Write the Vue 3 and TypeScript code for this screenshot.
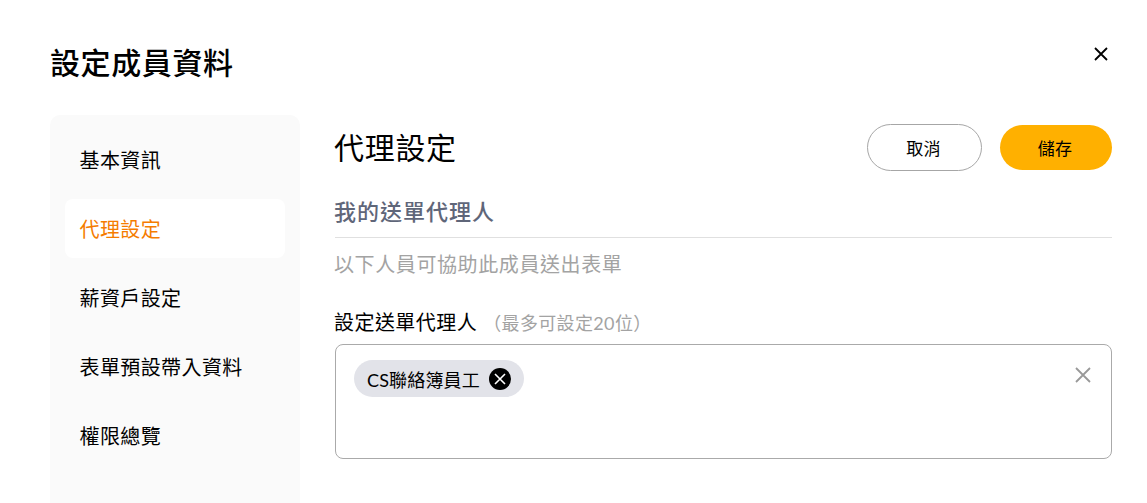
<script setup lang="ts">
const menu: string[] = ['基本資訊', '代理設定', '薪資戶設定', '表單預設帶入資料', '權限總覽']
const activeIndex = 1
</script>

<template>
  <div class="page">
    <header class="top">
      <h1 class="title">設定成員資料</h1>
      <button class="close" aria-label="關閉">
        <svg width="14" height="14" viewBox="0 0 14 14"><path d="M1 1L13 13M13 1L1 13" stroke="#000" stroke-width="1.8" fill="none" /></svg>
      </button>
    </header>
    <div class="body">
      <nav class="side">
        <div v-for="(m, i) in menu" :key="m" class="item" :class="{ active: i === activeIndex }">{{ m }}</div>
      </nav>
      <main class="main">
        <div class="head">
          <h2 class="heading">代理設定</h2>
          <div class="actions">
            <button class="btn cancel">取消</button>
            <button class="btn save">儲存</button>
          </div>
        </div>
        <h3 class="section">我的送單代理人</h3>
        <p class="desc">以下人員可協助此成員送出表單</p>
        <div class="label">設定送單代理人<span class="hint">（最多可設定20位）</span></div>
        <div class="box">
          <span class="chip">
            CS聯絡簿員工
            <svg class="chip-x" width="22" height="22" viewBox="0 0 22 22"><circle cx="11" cy="11" r="11" fill="#000" /><path d="M6 6L16 16M16 6L6 16" stroke="#fff" stroke-width="1.6" fill="none" /></svg>
          </span>
          <svg class="clear" width="16" height="16" viewBox="0 0 16 16"><path d="M1 1L15 15M15 1L1 15" stroke="#999" stroke-width="1.8" fill="none" /></svg>
        </div>
      </main>
    </div>
  </div>
</template>

<style>
html, body { margin: 0; background: #fff; overflow: hidden; }
</style>

<style scoped>
.page {
  width: 1147px;
  height: 503px;
  overflow: hidden;
  box-sizing: border-box;
  padding: 0 35px 0 50px;
  font-family: Lato, "Noto Sans CJK TC", sans-serif;
  color: #000;
}
.top {
  height: 115px;
  display: flex;
  justify-content: space-between;
  align-items: flex-start;
}
.title {
  margin: 39px 0 0;
  font-size: 30px;
  line-height: 46px;
  font-weight: 500;
  letter-spacing: 0.6px;
}
.close {
  margin: 47px 4px 0 0;
  padding: 0;
  border: 0;
  background: none;
  width: 14px;
  height: 14px;
  display: flex;
}
.body {
  display: flex;
  gap: 35px;
}
.side {
  width: 250px;
  height: 400px;
  flex: none;
  box-sizing: border-box;
  background: #fafafa;
  border-radius: 10px;
  padding: 15px;
  display: flex;
  flex-direction: column;
  gap: 10px;
}
.item {
  height: 59px;
  line-height: 61px;
  padding-left: 15px;
  border-radius: 8px;
  font-size: 20px;
  letter-spacing: 0.4px;
  text-indent: -0.5px;
}
.item.active {
  background: #fff;
  color: #f57c00;
}
.main {
  flex: 1;
  min-width: 0;
}
.head {
  height: 64px;
  display: flex;
  justify-content: space-between;
  align-items: center;
}
.heading {
  margin: 0 0 0 -1px;
  font-size: 30px;
  font-weight: 400;
  line-height: 64px;
  letter-spacing: 0.7px;
}
.actions {
  display: flex;
  align-items: center;
  gap: 18px;
}
.btn {
  font-family: inherit;
  font-size: 17px;
  letter-spacing: 0.3px;
  color: #000;
  border-radius: 24px;
  padding: 0 2px 0 0;
}
.cancel {
  width: 115px;
  height: 47px;
  background: #fff;
  border: 1px solid #a6a6a6;
}
.save {
  width: 112px;
  height: 45px;
  background: #ffb000;
  border: 0;
}
.section {
  margin: 15px 0 0;
  height: 43px;
  line-height: 36px;
  font-size: 22px;
  font-weight: 500;
  letter-spacing: 1px;
  color: #5f6679;
  border-bottom: 1px solid #e0e0e0;
  text-indent: -1px;
}
.desc {
  margin: 11px 0 0 -1px;
  font-size: 20px;
  line-height: 30px;
  letter-spacing: 0.6px;
  color: #a3a3a3;
}
.label {
  margin: 28px 0 0 -1px;
  font-size: 20px;
  line-height: 30px;
  letter-spacing: 0.45px;
}
.hint {
  font-size: 18px;
  color: #a3a3a3;
  margin-left: 6px;
  letter-spacing: 0.36px;
}
.box {
  position: relative;
  margin-top: 6px;
  height: 115px;
  box-sizing: border-box;
  border: 1px solid #aaa;
  border-radius: 8px;
  padding: 15px 18px;
}
.chip {
  display: inline-flex;
  align-items: center;
  gap: 9px;
  height: 37px;
  box-sizing: border-box;
  padding: 0 13px;
  background: #e2e3e9;
  border-radius: 19px;
  font-size: 18px;
  letter-spacing: 0.15px;
}
.chip-x {
  flex: none;
}
.clear {
  position: absolute;
  top: 22px;
  right: 20px;
}
</style>
